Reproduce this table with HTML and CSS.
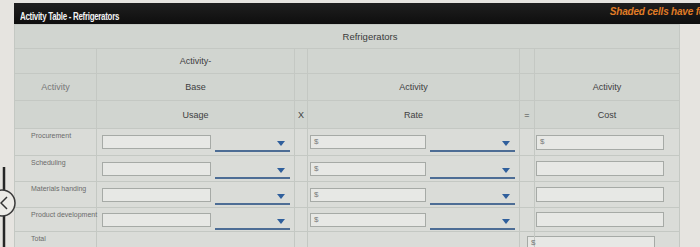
FILE: index.html
```html
<!DOCTYPE html>
<html lang="en">
<head>
    <meta charset="UTF-8">
    <meta name="viewport" content="width=device-width, initial-scale=1.0">
    <title>Activity Table - Refrigerators</title>
    <link rel="stylesheet" href="styles.css">
</head>
<body>
    <div class="sheet">
        <div class="titlebar">
            <span class="title">Activity Table - Refrigerators</span>
            <span class="note">Shaded cells have feedback.</span>
        </div>

        <table class="activity">
            <colgroup>
                <col class="c-label">
                <col class="c-usage">
                <col class="c-op">
                <col class="c-rate">
                <col class="c-eq">
                <col class="c-cost">
            </colgroup>
            <thead>
                <tr class="h1">
                    <th></th>
                    <th colspan="5" class="group">Refrigerators</th>
                </tr>
                <tr class="h2">
                    <th></th>
                    <th>Activity-</th>
                    <th></th>
                    <th></th>
                    <th></th>
                    <th></th>
                </tr>
                <tr class="h3">
                    <th class="muted">Activity</th>
                    <th>Base</th>
                    <th></th>
                    <th>Activity</th>
                    <th></th>
                    <th>Activity</th>
                </tr>
                <tr class="h4">
                    <th></th>
                    <th>Usage</th>
                    <th>X</th>
                    <th>Rate</th>
                    <th>=</th>
                    <th>Cost</th>
                </tr>
            </thead>
            <tbody>
                <tr class="r1">
                    <td class="label">Procurement</td>
                    <td><div class="pair"><span class="box usage"></span><span class="select"><span class="caret"></span></span></div></td>
                    <td></td>
                    <td><div class="pair"><span class="box rate">$</span><span class="select wide"><span class="caret"></span></span></div></td>
                    <td></td>
                    <td><span class="box cost">$</span></td>
                </tr>
                <tr class="r2">
                    <td class="label">Scheduling</td>
                    <td><div class="pair"><span class="box usage"></span><span class="select"><span class="caret"></span></span></div></td>
                    <td></td>
                    <td><div class="pair"><span class="box rate">$</span><span class="select wide"><span class="caret"></span></span></div></td>
                    <td></td>
                    <td><span class="box cost"></span></td>
                </tr>
                <tr class="r3">
                    <td class="label">Materials handing</td>
                    <td><div class="pair"><span class="box usage"></span><span class="select"><span class="caret"></span></span></div></td>
                    <td></td>
                    <td><div class="pair"><span class="box rate">$</span><span class="select wide"><span class="caret"></span></span></div></td>
                    <td></td>
                    <td><span class="box cost"></span></td>
                </tr>
                <tr class="r4">
                    <td class="label">Product development</td>
                    <td><div class="pair"><span class="box usage"></span><span class="select"><span class="caret"></span></span></div></td>
                    <td></td>
                    <td><div class="pair"><span class="box rate">$</span><span class="select wide"><span class="caret"></span></span></div></td>
                    <td></td>
                    <td><span class="box cost"></span></td>
                </tr>
                <tr class="total">
                    <td class="label">Total</td>
                    <td></td>
                    <td></td>
                    <td></td>
                    <td></td>
                    <td><span class="box cost sum">$</span></td>
                </tr>
            </tbody>
        </table>
        <div class="shadow"></div>
    </div>

    <!-- previous-question arrow on the left edge -->
    <svg class="back" width="24" height="90" viewBox="0 0 24 90">
        <line x1="6" y1="0" x2="6" y2="23" stroke="#262626" stroke-width="2.5"/>
        <line x1="6" y1="49" x2="6" y2="90" stroke="#262626" stroke-width="2.5"/>
        <circle cx="4" cy="36" r="13" fill="#ecebe7" stroke="#3a3a3a" stroke-width="1.5"/>
        <polyline points="9,30 3,36 9,42" fill="none" stroke="#333" stroke-width="1.5"/>
    </svg>
</body>
</html>
```

FILE: styles.css
```css
body {
    margin: 0;
    width: 700px;
    height: 247px;
    overflow: hidden;
    background-color: #e6e4e0;
    font-family: "Liberation Sans", Arial, sans-serif;
    position: relative;
}

.sheet {
    padding: 3px 0 0 14px;
}

.titlebar {
    display: flex;
    align-items: center;
    height: 21px;
    padding-left: 6px;
    background: linear-gradient(#1f1f1f, #0e0e0e);
    white-space: nowrap;
    overflow: hidden;
}

/* the heading font is a condensed bold, so squeeze Arial to fit */
.title {
    display: inline-block;
    color: #f2f2f2;
    font-weight: bold;
    font-size: 11px;
    letter-spacing: -0.4px;
    padding-top: 4px;
    transform: scaleX(0.72);
    transform-origin: left center;
}

.note {
    flex-shrink: 0;
    color: #e07c25;
    font-weight: bold;
    font-style: italic;
    font-size: 10px;
    letter-spacing: -0.2px;
    margin-left: auto;
    margin-right: -40px;
    padding-bottom: 5px;
}

.activity {
    border-collapse: collapse;
    table-layout: fixed;
    width: 665px;
    background-color: #dadcd8;
    color: #4a4a4a;
}

.c-label { width: 82px; }
.c-usage { width: 198px; }
.c-op { width: 13px; }
.c-rate { width: 212px; }
.c-eq { width: 15px; }
.c-cost { width: 145px; }

.activity th,
.activity td {
    padding: 0;
    border: 1px solid #c4c8c3;
}

.activity thead th {
    background-color: #d1d5d0;
    font-weight: normal;
    font-size: 9px;
    color: #404040;
    text-align: center;
}

.activity thead th.group {
    font-size: 9.5px;
    color: #3a3a3a;
    padding-right: 36px;
}

.activity thead th.muted {
    color: #777;
}

.h1 th { height: 23px; }
.h2 th { height: 24px; }
.h3 th { height: 26px; }
.h4 th { height: 27px; }

.activity thead .h1 th:first-child {
    border-right-color: transparent;
}

.r1 td { height: 23px; }
.r2 td { height: 22px; }
.r3 td { height: 22px; }
.r4 td { height: 20px; }
.total td { height: 16px; }

.activity td.label {
    font-size: 7px;
    color: #6b6b6b;
    padding-left: 16px;
    white-space: nowrap;
    vertical-align: top;
    padding-top: 3px;
}

.pair {
    display: flex;
    align-items: flex-end;
    gap: 4px;
    padding-left: 5px;
}

.box {
    display: block;
    box-sizing: border-box;
    height: 14px;
    background-color: #e7e8e5;
    border: 1px solid #a6aaa6;
    font-size: 8px;
    color: #7a7a7a;
    line-height: 12px;
    padding-left: 3px;
}

.usage { width: 109px; }
.rate { width: 116px; margin-left: -3px; }

.cost {
    width: 128px;
    height: 15px;
    margin-left: 1px;
}

.cost.sum {
    margin-left: -8px;
    margin-top: 4px;
}

.select {
    position: relative;
    display: block;
    width: 75px;
    height: 12px;
    border-bottom: 2px solid #4d6d95;
    margin-bottom: -3px;
}

.select.wide {
    width: 85px;
}

.caret {
    position: absolute;
    right: 5px;
    top: 3px;
    width: 0;
    height: 0;
    border-left: 4px solid transparent;
    border-right: 4px solid transparent;
    border-top: 5px solid #2f5f9c;
}

.total td {
    border-bottom: none;
}

.shadow {
    width: 665px;
    height: 4px;
    background: linear-gradient(#b9bbb8, #d8d8d5);
}

.back {
    position: absolute;
    left: -2px;
    top: 167px;
}
```
